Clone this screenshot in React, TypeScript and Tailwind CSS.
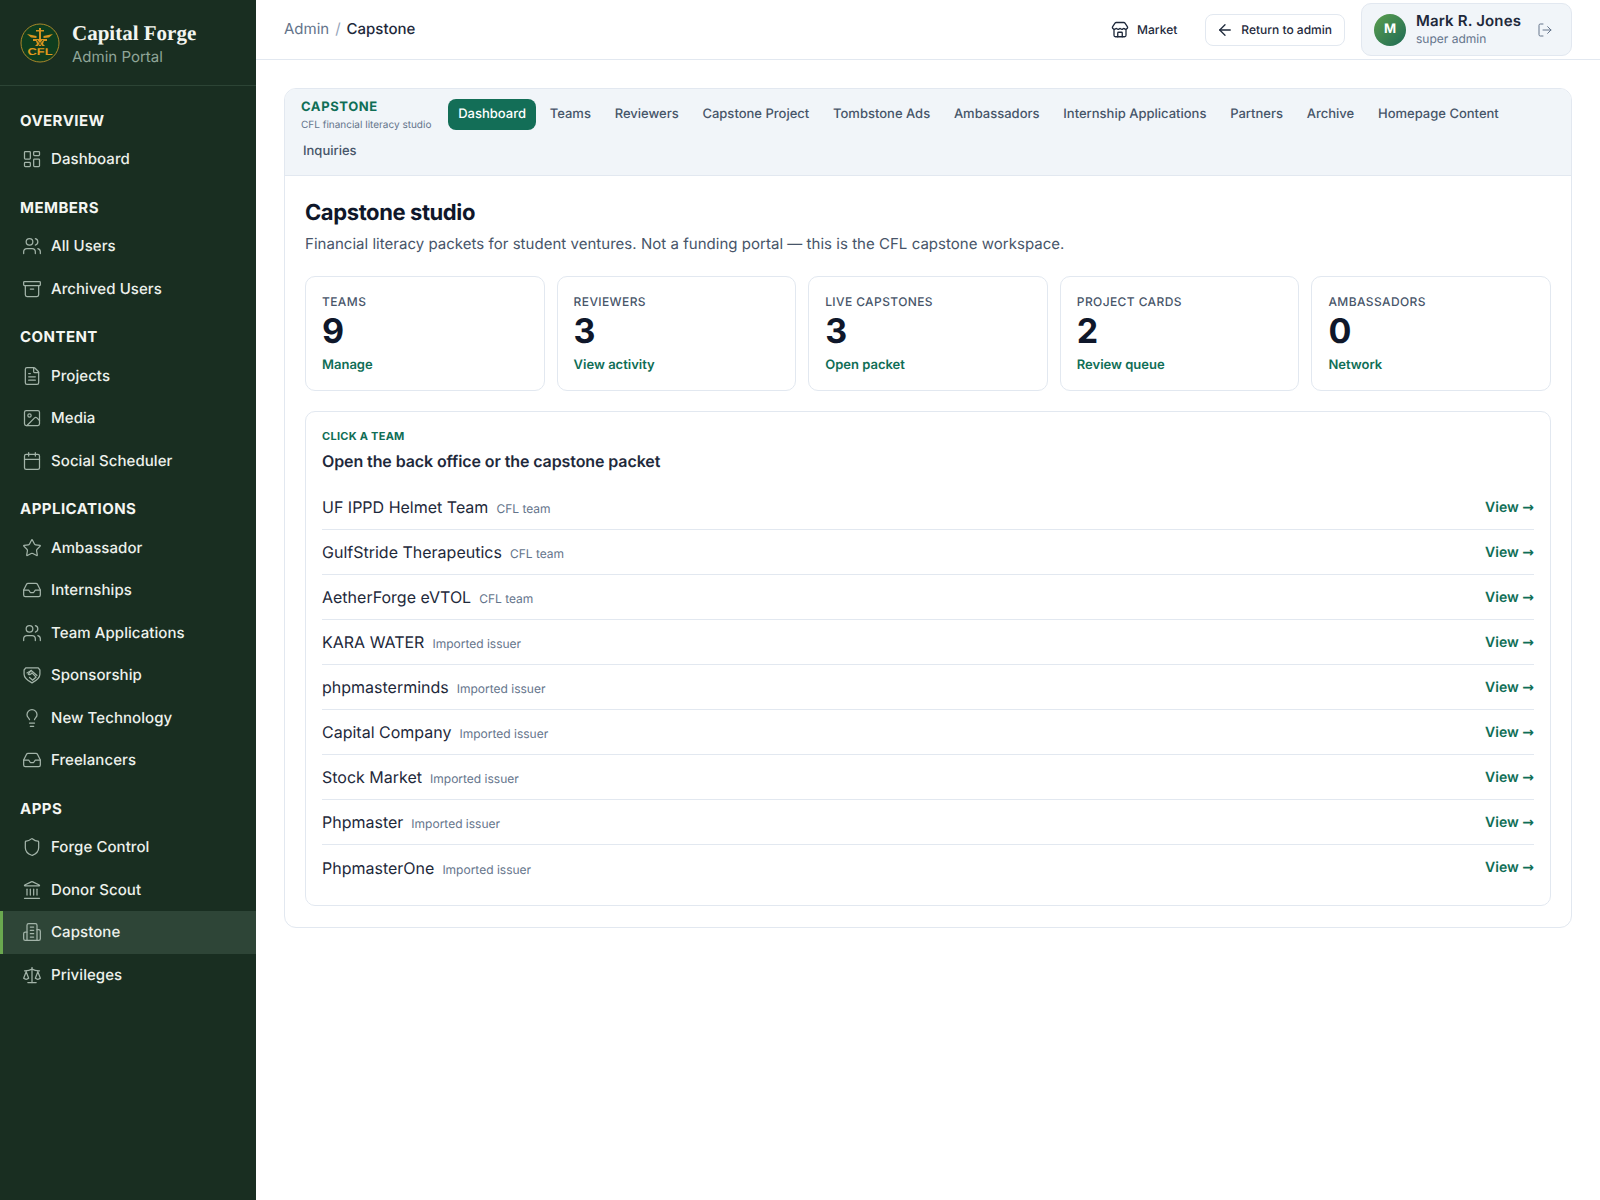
import {
  Archive,
  ArrowLeft,
  Calendar,
  FileText,
  Image,
  Inbox,
  Landmark,
  LayoutDashboard,
  Lightbulb,
  LogOut,
  Scale,
  Shield,
  Star,
  Store,
  Users,
} from "lucide-react"

function Building({ size, strokeWidth, className }: { size: number; strokeWidth: number; className: string }) {
  return (
    <svg width={size} height={size} viewBox="0 0 24 24" fill="none" stroke="currentColor" strokeWidth={strokeWidth} strokeLinecap="round" strokeLinejoin="round" className={className}>
      <path d="M6 22V4a2 2 0 0 1 2-2h8a2 2 0 0 1 2 2v18Z" />
      <path d="M6 12H4a2 2 0 0 0-2 2v6a2 2 0 0 0 2 2h2" />
      <path d="M18 9h2a2 2 0 0 1 2 2v9a2 2 0 0 1-2 2h-2" />
      <path d="M10 6h4M10 10h4M10 14h4M10 18h4" />
    </svg>
  )
}

function ShieldHands({ size, strokeWidth, className }: { size: number; strokeWidth: number; className: string }) {
  return (
    <svg width={size} height={size} viewBox="0 0 24 24" fill="none" stroke="currentColor" strokeWidth={strokeWidth} strokeLinecap="round" strokeLinejoin="round" className={className}>
      <path d="M4.500 3.500h15l2 2.500v5c0 4.500-5 8-9.500 10.500C7.500 19 2.500 15.500 2.500 11V6Z" />
      <path d="M6 9.500l5-3 7 6" />
      <path d="M11 6.500l-3.500 4.500c1.500 1 3 .5 4.500-1.500l5 5-4 3.500" />
      <path d="M9 15l3.500 3" />
    </svg>
  )
}

const navSections = [
  { title: "OVERVIEW", items: [{ label: "Dashboard", icon: LayoutDashboard }] },
  {
    title: "MEMBERS",
    items: [
      { label: "All Users", icon: Users },
      { label: "Archived Users", icon: Archive },
    ],
  },
  {
    title: "CONTENT",
    items: [
      { label: "Projects", icon: FileText },
      { label: "Media", icon: Image },
      { label: "Social Scheduler", icon: Calendar },
    ],
  },
  {
    title: "APPLICATIONS",
    items: [
      { label: "Ambassador", icon: Star },
      { label: "Internships", icon: Inbox },
      { label: "Team Applications", icon: Users },
      { label: "Sponsorship", icon: ShieldHands },
      { label: "New Technology", icon: Lightbulb },
      { label: "Freelancers", icon: Inbox },
    ],
  },
  {
    title: "APPS",
    items: [
      { label: "Forge Control", icon: Shield },
      { label: "Donor Scout", icon: Landmark },
      { label: "Capstone", icon: Building, active: true },
      { label: "Privileges", icon: Scale },
    ],
  },
]

const tabs = [
  "Teams",
  "Reviewers",
  "Capstone Project",
  "Tombstone Ads",
  "Ambassadors",
  "Internship Applications",
  "Partners",
  "Archive",
  "Homepage Content",
]

const stats = [
  { label: "TEAMS", value: "9", link: "Manage" },
  { label: "REVIEWERS", value: "3", link: "View activity" },
  { label: "LIVE CAPSTONES", value: "3", link: "Open packet" },
  { label: "PROJECT CARDS", value: "2", link: "Review queue" },
  { label: "AMBASSADORS", value: "0", link: "Network" },
]

const teams = [
  { name: "UF IPPD Helmet Team", kind: "CFL team" },
  { name: "GulfStride Therapeutics", kind: "CFL team" },
  { name: "AetherForge eVTOL", kind: "CFL team" },
  { name: "KARA WATER", kind: "Imported issuer" },
  { name: "phpmasterminds", kind: "Imported issuer" },
  { name: "Capital Company", kind: "Imported issuer" },
  { name: "Stock Market", kind: "Imported issuer" },
  { name: "Phpmaster", kind: "Imported issuer" },
  { name: "PhpmasterOne", kind: "Imported issuer" },
]

function Logo() {
  return (
    <svg width="40" height="40" viewBox="0 0 40 40" className="shrink-0">
      <circle cx="20" cy="20" r="19" fill="#0f3d1e" stroke="#a8882a" strokeWidth="1" />
      <path d="M7 11 L16.500 13 L16.500 15 L11 14.500 Z M33 11 L23.500 13 L23.500 15 L29 14.500 Z" fill="#d8931f" />
      <path d="M19 5 h2 v2 h3 v1.500 h-3 v8 h-2 v-8 h-3 v-1.500 h3 Z" fill="#d8931f" />
      <path d="M13 16 h14 v2 h-3 l-1 3 l2 2 h-10 l2 -2 l-1 -3 h-3 Z" fill="#d8931f" />
      <path d="M17 17 L22 23 M23 17 L18 23" stroke="#0f3d1e" strokeWidth="0.800" />
      <text x="20" y="32" textAnchor="middle" fontSize="10" fontWeight="700" fill="#e09a1c" fontFamily="Liberation Sans, sans-serif" textLength="25" lengthAdjust="spacingAndGlyphs">
        CFL
      </text>
    </svg>
  )
}

function Sidebar() {
  return (
    <aside className="w-[256px] shrink-0 bg-[#192e21] text-white">
      <div className="flex h-[86px] items-center gap-[12px] border-b border-[#2c4435] pl-[20px] pt-[1px]">
        <Logo />
        <div>
          <div className="font-['Liberation_Serif',serif] text-[21px] leading-[28px] font-bold text-[#f3f5f0]">
            Capital Forge
          </div>
          <div className="text-[15px] leading-[20px] text-[#8fa598]">Admin Portal</div>
        </div>
      </div>
      <nav className="pt-[13px]">
        {navSections.map((section) => (
          <div key={section.title} className="mb-[5.500px]">
            <div className="pl-[20px] pt-[10.500px] pb-[6.500px] text-[15px] leading-[22px] font-bold tracking-[0.45px] text-[#f4f6f2]">
              {section.title}
            </div>
            {section.items.map((item) => {
              const Icon = item.icon
              return (
                <div
                  key={item.label}
                  className={
                    "active" in item
                      ? "flex items-center gap-[9px] border-l-[3px] border-[#6aa84f] bg-[#2e4537] py-[10px] pl-[19px] text-[15px] leading-[22.5px] font-medium tracking-[0.07px] text-[#edf1ec]"
                      : "flex items-center gap-[9px] border-l-[3px] border-transparent py-[10px] pl-[19px] text-[15px] leading-[22.5px] font-medium tracking-[0.07px] text-[#edf1ec]"
                  }
                >
                  <Icon size={20} strokeWidth={1.5} className="text-[#a3b4a9]" />
                  <span>{item.label}</span>
                </div>
              )
            })}
          </div>
        ))}
      </nav>
    </aside>
  )
}

function Header() {
  return (
    <header className="flex h-[60px] items-center justify-between border-b border-[#e2e8f0] pl-[28px] pr-[28px]">
      <div className="flex items-center gap-[6px] text-[15px]">
        <span className="text-[#64748b]">Admin</span>
        <span className="text-[#94a3b8]">/</span>
        <span className="font-medium text-[#1e293b]">Capstone</span>
      </div>
      <div className="flex items-center gap-[16px]">
        <div className="flex items-center gap-[8px] pr-[12px] text-[12px] font-medium text-[#1e293b]">
          <Store size={18} strokeWidth={1.75} />
          <span>Market</span>
        </div>
        <div className="flex h-[32px] items-center gap-[7px] rounded-[8px] border border-[#e2e8f0] bg-white pl-[10px] pr-[12px] text-[12px] font-medium text-[#1e293b]">
          <ArrowLeft size={18} strokeWidth={1.75} />
          <span>Return to admin</span>
        </div>
        <div className="flex h-[53px] w-[211px] items-center gap-[10px] rounded-[10px] border border-[#e2e8f0] bg-[#f1f5f9] pl-[12px]">
          <div className="flex h-[32px] w-[32px] items-center justify-center rounded-full bg-gradient-to-br from-[#5a9e4b] to-[#1c6b54] text-[13px] font-bold text-white">
            M
          </div>
          <div className="w-[111px] pb-[2px]">
            <div className="text-[15px] leading-[20px] font-semibold tracking-[0.15px] text-[#1e293b]">Mark R. Jones</div>
            <div className="text-[12px] leading-[16px] text-[#64748b]">super admin</div>
          </div>
          <LogOut size={16} strokeWidth={1.5} className="text-[#64748b]" />
        </div>
      </div>
    </header>
  )
}

function TabBar() {
  return (
    <div className="flex flex-wrap gap-x-[3.750px] gap-y-[6px] border-b border-[#e2e8f0] bg-[#f1f5f9] px-[16px] pt-[10px] pb-[8px]">
      <div className="mr-[13px] h-[31px] shrink-0">
        <div className="text-[13px] leading-[16px] font-bold tracking-[0.6px] text-[#0f6e56]">CAPSTONE</div>
        <div className="mt-[3px] text-[10px] leading-[14px] text-[#64748b]">CFL financial literacy studio</div>
      </div>
      <div className="flex h-[31px] items-center rounded-[8px] bg-[#136e57] px-[10px] text-[13px] font-medium text-white">
        Dashboard
      </div>
      {tabs.map((tab) => (
        <div key={tab} className="flex h-[31px] items-center rounded-[8px] px-[10px] text-[13px] font-medium text-[#475569]">
          {tab}
        </div>
      ))}
      <div className="-ml-[8px] flex h-[31px] items-center rounded-[8px] px-[10px] text-[13px] font-medium text-[#475569]">
        Inquiries
      </div>
    </div>
  )
}

function StatCard({ label, value, link }: { label: string; value: string; link: string }) {
  return (
    <div className="flex-1 rounded-[10px] border border-[#e2e8f0] bg-white px-[16px] pt-[16px] pb-[15px]">
      <div className="text-[12px] leading-[18px] font-medium tracking-[0.4px] text-[#475569]">{label}</div>
      <div className="mt-[3px] text-[34px] leading-[36px] font-bold text-[#0f172a]">{value}</div>
      <div className="mt-[5px] text-[13px] leading-[20px] font-semibold text-[#0f6e56]">{link}</div>
    </div>
  )
}

function TeamList() {
  return (
    <div className="mt-[20px] rounded-[10px] border border-[#e2e8f0] bg-white px-[16px] pt-[16px] pb-[15px]">
      <div className="text-[11px] leading-[16px] font-bold tracking-[0.27px] text-[#0f6e56]">CLICK A TEAM</div>
      <div className="mt-[5px] mb-[12px] text-[16px] leading-[24px] font-semibold tracking-[-0.1px] text-[#1e293b]">
        Open the back office or the capstone packet
      </div>
      {teams.map((team, i) => (
        <div
          key={team.name}
          className={
            i === teams.length - 1
              ? "flex h-[45px] items-center justify-between"
              : "flex h-[45px] items-center justify-between border-b border-[#e2e8f0]"
          }
        >
          <div className="flex items-baseline gap-[8px]">
            <span className="text-[16px] text-[#1e293b]">{team.name}</span>
            <span className="text-[12px] text-[#64748b]">{team.kind}</span>
          </div>
          <span className="pt-[1px] text-[14px] leading-[20px] font-semibold text-[#0f6e56]">
            View <span className="font-['DejaVu_Sans',sans-serif] leading-none font-bold">→</span>
          </span>
        </div>
      ))}
    </div>
  )
}

export default function App() {
  return (
    <div className="flex min-h-[1200px] bg-white font-['Inter',sans-serif] [font-optical-sizing:none] [text-rendering:geometricPrecision]">
      <Sidebar />
      <main className="min-w-0 flex-1">
        <Header />
        <div className="px-[28px] pt-[28px]">
          <div className="overflow-hidden rounded-[12px] border border-[#e2e8f0] bg-white">
            <TabBar />
            <div className="px-[20px] pt-[21px] pb-[21px]">
              <h1 className="text-[22px] leading-[32px] font-bold tracking-[-0.4px] text-[#0f172a]">Capstone studio</h1>
              <p className="mt-[3px] text-[15px] leading-[24px] tracking-[0.03px] text-[#475569]">
                Financial literacy packets for student ventures. Not a funding portal — this is the CFL capstone workspace.
              </p>
              <div className="mt-[20px] flex gap-[12px]">
                {stats.map((s) => (
                  <StatCard key={s.label} {...s} />
                ))}
              </div>
              <TeamList />
            </div>
          </div>
        </div>
      </main>
    </div>
  )
}
